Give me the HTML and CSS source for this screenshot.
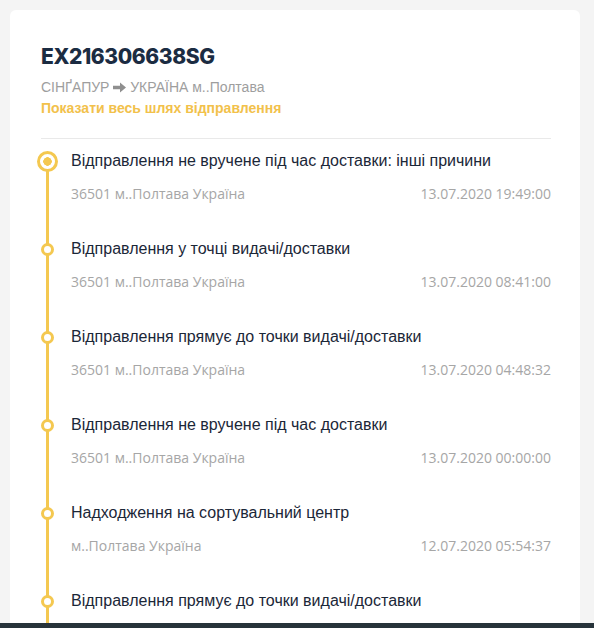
FILE: index.html
```html
<html>
<head>
<link rel="stylesheet" href="styles.css">
</head>

<body>
	<div class="card">
		<h1 class="number">EX216306638SG</h1>
		<p class="route">СІНҐАПУР <svg class="arrow" width="13" height="11" viewBox="0 0 13 11"><path d="M0 3.8h7V0.5l6 5-6 5V7.2H0z" fill="#8f8f8f"/></svg> УКРАЇНА м..Полтава</p>
		<a class="showAll" href="#">Показати весь шлях відправлення</a>
		<hr class="divider">

		<ul class="timeline">
			<li class="event current">
				<span class="dot"></span>
				<p class="eventName">Відправлення не вручене під час доставки: інші причини</p>
				<div class="eventInfo"><span>36501 м..Полтава Україна</span><span>13.07.2020 19:49:00</span></div>
			</li>
			<li class="event">
				<span class="dot"></span>
				<p class="eventName">Відправлення у точці видачі/доставки</p>
				<div class="eventInfo"><span>36501 м..Полтава Україна</span><span>13.07.2020 08:41:00</span></div>
			</li>
			<li class="event">
				<span class="dot"></span>
				<p class="eventName">Відправлення прямує до точки видачі/доставки</p>
				<div class="eventInfo"><span>36501 м..Полтава Україна</span><span>13.07.2020 04:48:32</span></div>
			</li>
			<li class="event">
				<span class="dot"></span>
				<p class="eventName">Відправлення не вручене під час доставки</p>
				<div class="eventInfo"><span>36501 м..Полтава Україна</span><span>13.07.2020 00:00:00</span></div>
			</li>
			<li class="event">
				<span class="dot"></span>
				<p class="eventName">Надходження на сортувальний центр</p>
				<div class="eventInfo"><span>м..Полтава Україна</span><span>12.07.2020 05:54:37</span></div>
			</li>
			<li class="event last">
				<span class="dot"></span>
				<p class="eventName">Відправлення прямує до точки видачі/доставки</p>
			</li>
		</ul>
	</div>

	<div class="bottomBar"></div>
</body>
</html>
```

FILE: styles.css
```css
body {
    margin: 0;
    padding: 10px 14px 0 10px;
    background: #f4f4f4;
    height: 628px;
    overflow: hidden;
    box-sizing: border-box;
    font-family: "Liberation Sans", Arial, sans-serif;
}

.card {
    background: #fff;
    border-radius: 6px;
    padding: 32px 29px 0 31px;
    min-height: 700px;
}

.number {
    margin: 0;
    font: 800 21px/30px Inter, "Open Sans", sans-serif;
    color: #1b2c42;
    letter-spacing: -0.4px;
}

.route {
    margin: 5px 0 0;
    font-size: 14px;
    line-height: 20px;
    color: #9e9e9e;
}

.arrow {
    vertical-align: -1px;
}

.showAll {
    display: block;
    margin-top: 1px;
    font-size: 14px;
    font-weight: bold;
    line-height: 20px;
    color: #f2c14b;
    text-decoration: none;
}

.divider {
    margin: 20px 0 0;
    border: 0;
    border-top: 1px solid #e9e9e9;
}

.timeline {
    list-style: none;
    margin: 12px 0 0;
    padding: 0;
    position: relative;
}

.timeline::before {
    content: "";
    position: absolute;
    left: 5px;
    top: 4px;
    bottom: 0;
    width: 3px;
    background: #f4c850;
}

.event {
    position: relative;
    padding: 0 0 35px 30px;
}

.event.last {
    padding-bottom: 60px;
}

.eventName {
    margin: 0;
    font-size: 16px;
    line-height: 20px;
    color: #1b2738;
}

.eventInfo {
    display: flex;
    justify-content: space-between;
    margin-top: 13px;
    font: 14px/20px "Open Sans", sans-serif;
    color: #a6a6a6;
}

.dot {
    position: absolute;
    left: 0;
    top: 4px;
    width: 7px;
    height: 7px;
    border: 3px solid #f4c850;
    border-radius: 50%;
    background: #fff;
}

.current .dot {
    left: -4px;
    top: 0;
    width: 15px;
    height: 15px;
    background: radial-gradient(circle, #f4c850 0 4px, #fff 4.5px);
}

.bottomBar {
    position: fixed;
    left: 0;
    right: 0;
    bottom: 0;
    height: 5px;
    background: #27333a;
}
```
